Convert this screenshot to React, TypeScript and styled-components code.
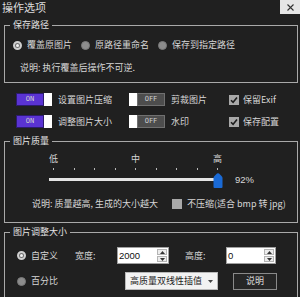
import React from "react";
import styled, { createGlobalStyle } from "styled-components";

const Global = createGlobalStyle`
  html, body { margin: 0; padding: 0; background: #202020; }
  body {
    font-family: "Noto Sans CJK SC", "Noto Sans", sans-serif;
    color: #d6d6d6;
    font-size: 9px;
  }
  * { box-sizing: border-box; }
`;

const Window = styled.div`
  width: 300px;
  height: 297px;
  overflow: hidden;
  background: #202020;
  display: flex;
  flex-direction: column;
`;

const TitleBar = styled.div`
  height: 14px;
  flex-shrink: 0;
  display: flex;
  align-items: center;
  justify-content: space-between;
`;

const Title = styled.span`
  font-size: 11px;
  line-height: 14px;
  padding-left: 2px;
  color: #dcdcdc;
`;

const CloseButton = styled.div`
  width: 20px;
  height: 14px;
  background: #e6e6e6;
  display: flex;
  align-items: center;
  justify-content: center;
`;

const Content = styled.div`
  padding: 0 2px 0 4px;
  display: flex;
  flex-direction: column;
`;

const Group = styled.div<{ $top: number; $h: number; $padTop: number }>`
  position: relative;
  flex-shrink: 0;
  margin-top: ${(p) => p.$top}px;
  height: ${(p) => p.$h}px;
  padding-top: ${(p) => p.$padTop}px;
  border: 1px solid #a9a9a9;
  display: flex;
  flex-direction: column;
`;

const GroupLabel = styled.span`
  position: absolute;
  top: -7px;
  left: 5px;
  padding: 0 3px;
  background: #202020;
  line-height: 12px;
  font-size: 9px;
  color: #e2e2e2;
`;

const RadioRow = styled.div`
  display: flex;
  align-items: center;
  gap: 9px;
  height: 12px;
  padding-left: 8px;
`;

const RadioItem = styled.label<{ $w?: number }>`
  display: flex;
  align-items: center;
  gap: 5px;
  line-height: 12px;
  white-space: nowrap;
  ${(p) => (p.$w ? `width: ${p.$w}px; flex-shrink: 0;` : "")}
`;

const Radio = styled.span<{ $checked?: boolean }>`
  width: 9px;
  height: 9px;
  border-radius: 50%;
  flex-shrink: 0;
  display: flex;
  align-items: center;
  justify-content: center;
  background: ${(p) => (p.$checked ? "#6e6e6e" : "#8c8c8c")};
  border: ${(p) => (p.$checked ? "2px solid #cfcfcf" : "1px solid #7a7a7a")};
  &::after {
    content: "";
    width: 3px;
    height: 3px;
    border-radius: 50%;
    background: ${(p) => (p.$checked ? "#f2f2f2" : "transparent")};
  }
`;

const Desc = styled.div<{ $top: number; $left: number }>`
  margin-top: ${(p) => p.$top}px;
  padding-left: ${(p) => p.$left}px;
  line-height: 12px;
  white-space: nowrap;
`;

const ToggleGrid = styled.div`
  display: grid;
  grid-template-columns: 113px 100px auto;
  grid-auto-rows: 13px;
  row-gap: 9px;
  align-items: center;
  margin-top: 10px;
  padding-left: 12px;
`;

const ToggleItem = styled.div`
  display: flex;
  align-items: center;
  gap: 6px;
  white-space: nowrap;
  line-height: 12px;
`;

const Switch = styled.div<{ $on: boolean }>`
  width: 36px;
  height: 13px;
  flex-shrink: 0;
  display: flex;
  flex-direction: ${(p) => (p.$on ? "row" : "row-reverse")};
`;

const SwitchTrack = styled.div<{ $on: boolean }>`
  flex: 1;
  background: ${(p) => (p.$on ? "#5a33d3" : "#4d4d4d")};
  border: 1px solid ${(p) => (p.$on ? "#2c1b6e" : "#707070")};
  display: flex;
  align-items: center;
  justify-content: center;
  font-family: "DejaVu Sans Mono", monospace;
  font-size: 7px;
  line-height: 11px;
  color: #cfcfcf;
`;

const SwitchKnob = styled.div`
  width: 8px;
  background: #ffffff;
`;

const CheckItem = styled.label<{ $gap: number }>`
  display: flex;
  align-items: center;
  gap: ${(p) => p.$gap}px;
  white-space: nowrap;
  line-height: 12px;
`;

const CheckBox = styled.span`
  width: 10px;
  height: 10px;
  flex-shrink: 0;
  background: #a8a8a8;
  display: flex;
  align-items: center;
  justify-content: center;
`;

const SliderRow = styled.div`
  display: flex;
  align-items: flex-end;
  margin-left: 44px;
`;

const SliderBox = styled.div`
  width: 173px;
  display: flex;
  flex-direction: column;
`;

const LabelRow = styled.div`
  display: flex;
  justify-content: space-between;
  height: 11px;
  line-height: 11px;
`;

const TickRow = styled.div`
  margin-top: 4px;
  padding: 0 4px;
  height: 3px;
  display: flex;
  justify-content: space-between;
`;

const Tick = styled.span`
  width: 1px;
  height: 2px;
  background: #b8b8b8;
`;

const TrackArea = styled.div`
  position: relative;
  margin-top: 2px;
  height: 15px;
`;

const Track = styled.div`
  position: absolute;
  left: 0;
  right: 0;
  top: 5px;
  height: 3px;
  background: #e4e4e4;
`;

const Thumb = styled.svg`
  position: absolute;
  top: 0;
  width: 10px;
  height: 15px;
`;

const Percent = styled.span`
  margin-left: 13px;
  margin-bottom: 3px;
  line-height: 11px;
  font-family: "Liberation Sans", sans-serif;
  font-size: 9.5px;
  color: #d8d8d8;
`;

const DescRow = styled.div`
  display: flex;
  align-items: center;
  height: 11px;
  margin-top: 10px;
  padding-left: 27px;
`;

const DescText = styled.span`
  width: 140px;
  flex-shrink: 0;
  white-space: nowrap;
  line-height: 11px;
`;

const FormRow = styled.div<{ $top?: number; $h: number }>`
  display: flex;
  align-items: center;
  height: ${(p) => p.$h}px;
  margin-top: ${(p) => p.$top ?? 0}px;
  padding-left: 12px;
`;

const FieldLabel = styled.span<{ $w: number; $ml?: number }>`
  width: ${(p) => p.$w}px;
  margin-left: ${(p) => p.$ml ?? 0}px;
  flex-shrink: 0;
  white-space: nowrap;
  line-height: 12px;
`;

const SpinBox = styled.div<{ $w: number }>`
  width: ${(p) => p.$w}px;
  height: 17px;
  flex-shrink: 0;
  background: #ffffff;
  border: 1px solid #a0a0a0;
  display: flex;
  align-items: stretch;
`;

const SpinValue = styled.span`
  flex: 1;
  padding-left: 1px;
  font-family: "Liberation Sans", sans-serif;
  font-size: 9.5px;
  line-height: 15px;
  color: #111;
`;

const SpinButtons = styled.div`
  width: 10px;
  margin: 1px 1px 1px 0;
  display: flex;
  flex-direction: column;
  gap: 1px;
`;

const SpinButton = styled.div`
  flex: 1;
  background: #ececec;
  border: 1px solid #b4b4b4;
  display: flex;
  align-items: center;
  justify-content: center;
`;

const Select = styled.div`
  margin-left: 50px;
  width: 93px;
  height: 18px;
  flex-shrink: 0;
  background: #f2f2f2;
  border: 1px solid #b8b8b8;
  color: #222;
  display: flex;
  align-items: center;
  justify-content: space-between;
  padding: 0 4px 0 4px;
  line-height: 12px;
  white-space: nowrap;
`;

const Button = styled.div`
  margin-left: 15px;
  width: 44px;
  height: 17px;
  flex-shrink: 0;
  border: 1px solid #8a8a8a;
  background: #262626;
  color: #dcdcdc;
  display: flex;
  align-items: center;
  justify-content: center;
  line-height: 12px;
`;

const Check = () => (
  <svg width="8" height="8" viewBox="0 0 8 8">
    <path d="M1 4.2 L3.1 6.3 L7 1.6" fill="none" stroke="#1c1c1c" strokeWidth="1.6" />
  </svg>
);

const Toggle = ({ on }: { on: boolean }) => (
  <Switch $on={on}>
    <SwitchTrack $on={on}>{on ? "ON" : "OFF"}</SwitchTrack>
    <SwitchKnob />
  </Switch>
);

const Spin = ({ value, w }: { value: string; w: number }) => (
  <SpinBox $w={w}>
    <SpinValue>{value}</SpinValue>
    <SpinButtons>
      <SpinButton>
        <svg width="5" height="3" viewBox="0 0 5 3">
          <path d="M0 3 L2.5 0 L5 3 Z" fill="#333" />
        </svg>
      </SpinButton>
      <SpinButton>
        <svg width="5" height="3" viewBox="0 0 5 3">
          <path d="M0 0 L2.5 3 L5 0 Z" fill="#333" />
        </svg>
      </SpinButton>
    </SpinButtons>
  </SpinBox>
);

export default function App() {
  const value = 8;
  const max = 8;
  const thumbLeft = 4 + (value / max) * 164 - 4.5;
  const ticks = Array.from({ length: 9 });

  return (
    <>
      <Global />
      <Window>
        <TitleBar>
          <Title>操作选项</Title>
          <CloseButton>
            <svg width="7" height="7" viewBox="0 0 7 7">
              <path d="M0.5 0.5 L6.5 6.5 M6.5 0.5 L0.5 6.5" stroke="#333" strokeWidth="1.1" />
            </svg>
          </CloseButton>
        </TitleBar>
        <Content>
          <Group $top={11} $h={58} $padTop={13}>
            <GroupLabel>保存路径</GroupLabel>
            <RadioRow>
              <RadioItem>
                <Radio $checked />
                覆盖原图片
              </RadioItem>
              <RadioItem>
                <Radio />
                原路径重命名
              </RadioItem>
              <RadioItem>
                <Radio />
                保存到指定路径
              </RadioItem>
            </RadioRow>
            <Desc $top={11} $left={15}>
              说明: 执行覆盖后操作不可逆.
            </Desc>
          </Group>

          <ToggleGrid>
            <ToggleItem>
              <Toggle on />
              设置图片压缩
            </ToggleItem>
            <ToggleItem>
              <Toggle on={false} />
              剪裁图片
            </ToggleItem>
            <CheckItem $gap={4}>
              <CheckBox>
                <Check />
              </CheckBox>
              保留Exif
            </CheckItem>
            <ToggleItem>
              <Toggle on />
              调整图片大小
            </ToggleItem>
            <ToggleItem>
              <Toggle on={false} />
              水印
            </ToggleItem>
            <CheckItem $gap={4}>
              <CheckBox>
                <Check />
              </CheckBox>
              保存配置
            </CheckItem>
          </ToggleGrid>

          <Group $top={13} $h={82} $padTop={11}>
            <GroupLabel>图片质量</GroupLabel>
            <SliderRow>
              <SliderBox>
                <LabelRow>
                  <span>低</span>
                  <span>中</span>
                  <span>高</span>
                </LabelRow>
                <TickRow>
                  {ticks.map((_, i) => (
                    <Tick key={i} />
                  ))}
                </TickRow>
                <TrackArea>
                  <Track />
                  <Thumb viewBox="0 0 10 15" style={{ left: thumbLeft }}>
                    <path
                      d="M0.5 5 Q0.5 4 1.5 3 L4 0.6 Q5 0 6 0.6 L8.5 3 Q9.5 4 9.5 5 L9.5 14 Q9.5 15 8.5 15 L1.5 15 Q0.5 15 0.5 14 Z"
                      fill="#1a6ad6"
                    />
                  </Thumb>
                </TrackArea>
              </SliderBox>
              <Percent>92%</Percent>
            </SliderRow>
            <DescRow>
              <DescText>说明: 质量越高, 生成的大小越大</DescText>
              <CheckItem $gap={5}>
                <CheckBox />
                不压缩(适合 bmp 转 jpg)
              </CheckItem>
            </DescRow>
          </Group>

          <Group $top={9} $h={90} $padTop={14}>
            <GroupLabel>图片调整大小</GroupLabel>
            <FormRow $h={17}>
              <RadioItem $w={58}>
                <Radio $checked />
                自定义
              </RadioItem>
              <FieldLabel $w={42}>宽度:</FieldLabel>
              <Spin value="2000" w={52} />
              <FieldLabel $w={41} $ml={16}>
                高度:
              </FieldLabel>
              <Spin value="0" w={50} />
            </FormRow>
            <FormRow $h={18} $top={8}>
              <RadioItem $w={58}>
                <Radio />
                百分比
              </RadioItem>
              <Select>
                <span>高质量双线性插值</span>
                <svg width="5" height="3" viewBox="0 0 5 3">
                  <path d="M0 0 L2.5 3 L5 0 Z" fill="#444" />
                </svg>
              </Select>
              <Button>说明</Button>
            </FormRow>
          </Group>
        </Content>
      </Window>
    </>
  );
}
